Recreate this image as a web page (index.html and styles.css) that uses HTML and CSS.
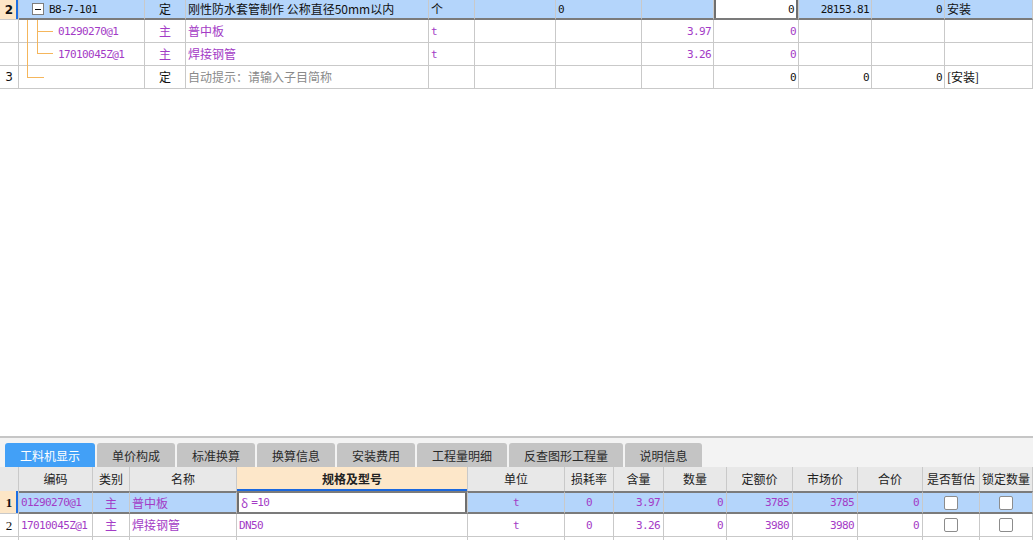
FILE: index.html
```html
<!DOCTYPE html>
<html lang="zh-CN">
<head>
<meta charset="utf-8">
<title>工料机</title>
<link rel="stylesheet" href="styles.css">
</head>
<body>
<div class="app">
  <div class="top">
    <div class="row ra sel">
      <div class="cell rn bold cur">2</div>
      <div class="cell tree"><span class="minus"></span><span class="mono code">B8-7-101</span></div>
      <div class="cell c">定</div>
      <div class="cell">刚性防水套管制作 公称直径50mm以内</div>
      <div class="cell">个</div>
      <div class="cell"></div>
      <div class="cell mono">0</div>
      <div class="cell"></div>
      <div class="cell mono r active">0</div>
      <div class="cell mono r">28153.81</div>
      <div class="cell mono r">0</div>
      <div class="cell">安装</div>
    </div>
    <div class="row pur">
      <div class="cell rn"></div>
      <div class="cell tree child"><span class="mono">01290270@1</span></div>
      <div class="cell c">主</div>
      <div class="cell">普中板</div>
      <div class="cell mono">t</div>
      <div class="cell"></div>
      <div class="cell"></div>
      <div class="cell mono r">3.97</div>
      <div class="cell mono r">0</div>
      <div class="cell"></div>
      <div class="cell"></div>
      <div class="cell"></div>
    </div>
    <div class="row pur">
      <div class="cell rn"></div>
      <div class="cell tree child"><span class="mono">17010045Z@1</span></div>
      <div class="cell c">主</div>
      <div class="cell">焊接钢管</div>
      <div class="cell mono">t</div>
      <div class="cell"></div>
      <div class="cell"></div>
      <div class="cell mono r">3.26</div>
      <div class="cell mono r">0</div>
      <div class="cell"></div>
      <div class="cell"></div>
      <div class="cell"></div>
    </div>
    <div class="row">
      <div class="cell rn">3</div>
      <div class="cell tree"></div>
      <div class="cell c">定</div>
      <div class="cell hint">自动提示：请输入子目简称</div>
      <div class="cell"></div>
      <div class="cell"></div>
      <div class="cell"></div>
      <div class="cell"></div>
      <div class="cell mono r">0</div>
      <div class="cell mono r">0</div>
      <div class="cell mono r">0</div>
      <div class="cell">[安装]</div>
    </div>
    <svg class="treelines" width="60" height="90" viewBox="0 0 60 90">
      <g stroke="#f5b65c" stroke-width="1" fill="none" shape-rendering="crispEdges">
        <path d="M27.5 20V77.5H44"/>
        <path d="M37.5 20V53.5H53"/>
        <path d="M37.5 31.5H53"/>
      </g>
    </svg>
  </div>

  <div class="bottom">
    <div class="tabs">
      <div class="tab on w90">工料机显示</div>
      <div class="tab w78">单价构成</div>
      <div class="tab w78">标准换算</div>
      <div class="tab w78">换算信息</div>
      <div class="tab w78">安装费用</div>
      <div class="tab w90">工程量明细</div>
      <div class="tab w114">反查图形工程量</div>
      <div class="tab w77">说明信息</div>
    </div>
    <div class="brow head">
      <div class="bc"></div>
      <div class="bc c">编码</div>
      <div class="bc c">类别</div>
      <div class="bc c">名称</div>
      <div class="bc c spec">规格及型号</div>
      <div class="bc c">单位</div>
      <div class="bc c">损耗率</div>
      <div class="bc c">含量</div>
      <div class="bc c">数量</div>
      <div class="bc c">定额价</div>
      <div class="bc c">市场价</div>
      <div class="bc c">合价</div>
      <div class="bc c">是否暂估</div>
      <div class="bc c">锁定数量</div>
    </div>
    <div class="brow sel pur r1">
      <div class="bc rn cur">1</div>
      <div class="bc mono">01290270@1</div>
      <div class="bc c">主</div>
      <div class="bc">普中板</div>
      <div class="bc mono active"><span class="greek">δ</span>=10</div>
      <div class="bc mono c">t</div>
      <div class="bc mono c">0</div>
      <div class="bc mono r">3.97</div>
      <div class="bc mono r">0</div>
      <div class="bc mono r">3785</div>
      <div class="bc mono r">3785</div>
      <div class="bc mono r">0</div>
      <div class="bc c"><span class="chk"></span></div>
      <div class="bc c"><span class="chk"></span></div>
    </div>
    <div class="brow pur">
      <div class="bc rn">2</div>
      <div class="bc mono">17010045Z@1</div>
      <div class="bc c">主</div>
      <div class="bc">焊接钢管</div>
      <div class="bc mono">DN50</div>
      <div class="bc mono c">t</div>
      <div class="bc mono c">0</div>
      <div class="bc mono r">3.26</div>
      <div class="bc mono r">0</div>
      <div class="bc mono r">3980</div>
      <div class="bc mono r">3980</div>
      <div class="bc mono r">0</div>
      <div class="bc c"><span class="chk"></span></div>
      <div class="bc c"><span class="chk"></span></div>
    </div>
    <div class="brow tail">
      <div class="bc"></div><div class="bc"></div><div class="bc"></div><div class="bc"></div>
      <div class="bc"></div><div class="bc"></div><div class="bc"></div><div class="bc"></div>
      <div class="bc"></div><div class="bc"></div><div class="bc"></div><div class="bc"></div>
      <div class="bc"></div><div class="bc"></div>
    </div>
  </div>
</div>
</body>
</html>
```

FILE: styles.css
```css
html, body {
  margin: 0;
  padding: 0;
  background: #ffffff;
}
body {
  font-family: "Noto Sans CJK SC", "DejaVu Sans", sans-serif;
  font-size: 12px;
  color: #111;
}
.app {
  width: 1033px;
  height: 540px;
  display: flex;
  flex-direction: column;
  overflow: hidden;
}
.top {
  position: relative;
  flex: 1;
  min-height: 0;
}
.row {
  display: grid;
  grid-template-columns: 19px 126px 41px 243px 46px 81px 86px 72px 85px 73px 73px 1fr;
  height: 23px;
}
.cell {
  box-sizing: border-box;
  border-right: 1px solid #c9c9c9;
  border-bottom: 1px solid #c9c9c9;
  display: flex;
  align-items: center;
  padding: 0 2px;
  white-space: nowrap;
  overflow: hidden;
  line-height: 1;
}
.cell.c { justify-content: center; }
.cell.r { justify-content: flex-end; }
.mono {
  font-family: "DejaVu Sans Mono", "Liberation Mono", monospace;
  font-size: 11px;
  letter-spacing: -0.6px;
}
.greek {
  font-family: "Noto Sans CJK SC", sans-serif;
  font-size: 12px;
  letter-spacing: 0;
  margin-right: 3px;
}
.row.ra { height: 20px; }
.row.sel .cell {
  background: #b4d5fb;
  border-bottom: 2px solid #7b7b7b;
}
.row.sel .cell.rn {
  border-bottom: 1px solid #c9c9c9;
}
.rn {
  justify-content: center;
  padding: 0;
  font-family: "DejaVu Sans", sans-serif;
  font-size: 12px;
}
.row.sel .cell.rn.cur,
.rn.cur {
  background: #fde6c6;
  box-shadow: inset -2px 0 0 #1e6fe3;
}
.bold { font-weight: bold; }
.row .cell.active {
  background: #ffffff;
  box-shadow: inset 2px 0 0 #6f6f6f, inset -2px 0 0 #6f6f6f;
  padding-right: 4px;
}
.tree { padding: 0; }
.tree.child { padding-left: 39px; }
.minus {
  box-sizing: border-box;
  width: 12px;
  height: 12px;
  margin-left: 13px;
  margin-right: 5px;
  border: 1px solid #7d7d7d;
  background: #fff;
  display: flex;
  align-items: center;
  justify-content: center;
  flex: none;
}
.minus::before {
  content: "";
  width: 6px;
  height: 1px;
  background: #111;
}
.pur .cell, .pur .bc { color: #a33bc6; }
.pur .cell.rn, .pur .bc.rn { color: #111; }
.hint { color: #8a8a8a; }
.treelines {
  position: absolute;
  left: 0;
  top: 0;
  pointer-events: none;
}

/* bottom panel */
.bottom {
  flex: none;
  border-top: 2px solid #c6c6c6;
  background: #ffffff;
}
.tabs {
  height: 29px;
  background: #f3f3f3;
  display: flex;
  align-items: flex-end;
  gap: 2px;
  padding-left: 5px;
}
.tab {
  box-sizing: border-box;
  height: 24px;
  background: #c4c4c4;
  border-radius: 3px 3px 0 0;
  color: #2a2a2a;
  font-size: 12px;
  display: flex;
  align-items: center;
  justify-content: center;
  white-space: nowrap;
}
.tab.on {
  background: #42a0f7;
  color: #ffffff;
}
.w90 { width: 90px; }
.w78 { width: 78px; }
.w77 { width: 77px; }
.w114 { width: 114px; }

.brow {
  display: grid;
  grid-template-columns: 19px 74px 37px 107px 231px 97px 49px 50px 63px 66px 65px 65px 57px 1fr;
  height: 23px;
}
.brow.tail { height: 3px; }
.brow.tail .bc { border-bottom: 0; }
.bc {
  box-sizing: border-box;
  border-right: 1px solid #c9c9c9;
  border-bottom: 1px solid #c9c9c9;
  display: flex;
  align-items: center;
  padding: 0 2px;
  white-space: nowrap;
  overflow: hidden;
  line-height: 1;
}
.bc.c { justify-content: center; }
.bc.r { justify-content: flex-end; padding-right: 3px; }
.brow.head { height: 24px; }
.brow.head .bc {
  background: #e8e8e8;
  color: #222;
  border-bottom: 0;
}
.brow.head .bc.spec {
  background: #fde7c9;
  font-weight: bold;
  box-shadow: inset 0 -2px 0 #1b68de;
}
.brow.r1 { height: 23px; }
.brow.sel .bc {
  background: #b4d5fb;
  border-top: 2px solid #7b7b7b;
  border-bottom: 2px solid #7b7b7b;
}
.brow .bc.rn {
  font-family: "Liberation Serif", "DejaVu Serif", serif;
  font-size: 13px;
  justify-content: center;
  padding: 0;
  color: #111;
}
.brow.sel .bc.rn {
  border-top: 0;
  border-bottom: 1px solid #c9c9c9;
  background: #fde6c6;
  font-weight: bold;
  box-shadow: inset -2px 0 0 #1e6fe3;
}
.brow.sel .bc.active {
  background: #ffffff;
  box-shadow: inset 2px 0 0 #6f6f6f, inset -2px 0 0 #6f6f6f;
  padding-left: 4px;
}
.chk {
  box-sizing: border-box;
  width: 14px;
  height: 14px;
  border: 1px solid #8c8c8c;
  border-radius: 2px;
  background: #ffffff;
}
```
